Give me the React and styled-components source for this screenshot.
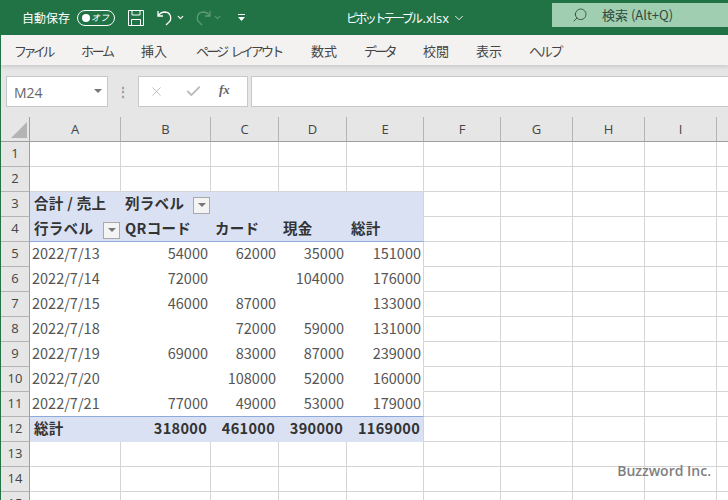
import React from "react";
import styled, { createGlobalStyle } from "styled-components";
import { Search, ChevronDown, X, Check } from "lucide-react";

const GlobalStyle = createGlobalStyle`
  html, body { margin: 0; padding: 0; background: #fff; }
  body { font-family: "Noto Sans CJK JP", "Liberation Sans", sans-serif; }
  #root { width: 728px; height: 500px; overflow: hidden; }
`;

const Page = styled.div`
  position: relative;
  width: 728px;
  height: 500px;
  overflow: hidden;
  border-left: 1px solid #217346;
  box-sizing: border-box;
`;

const TitleBar = styled.div`
  display: flex;
  align-items: center;
  height: 35px;
  margin-left: -1px;
  background: #217346;
  color: #fff;
`;
const AutoSave = styled.span`
  margin-left: 22px;
  font-size: 12px;
  width: 49px;
  white-space: nowrap;
`;
const Toggle = styled.div`
  display: flex;
  align-items: center;
  justify-content: space-between;
  box-sizing: border-box;
  width: 38px;
  height: 16px;
  margin-left: 6px;
  padding: 0 5px 0 4px;
  border: 1px solid #fff;
  border-radius: 8px;
  font-size: 9px;
  font-style: italic;
`;
const Knob = styled.i`
  width: 8px;
  height: 8px;
  border-radius: 50%;
  background: #fff;
`;
const QuickIcon = styled.svg`
  display: block;
  flex: none;
  margin-left: ${(p) => p.$gap}px;
`;
const SmallChevron = styled(ChevronDown)`
  flex: none;
  margin-left: ${(p) => p.$gap}px;
`;
const FileName = styled.div`
  display: flex;
  align-items: center;
  margin-left: 100px;
  width: 206px;
  font-size: 12px;
  white-space: nowrap;
`;
const FileKana = styled.span`
  letter-spacing: -2.6px;
  margin-right: 2px;
`;
const FileExt = styled.span`
  font-family: "Open Sans", sans-serif;
  font-size: 13px;
  margin-right: 3px;
`;
const SearchBox = styled.div`
  display: flex;
  align-items: center;
  width: 176px;
  height: 24px;
  margin-top: -6px;
  background: #9fcfb0;
  color: #33493b;
  font-size: 13px;
`;
const SearchIcon = styled(Search)`
  margin-left: 20px;
  transform: scaleX(-1);
`;
const SearchLabel = styled.span`
  margin-left: 14px;
  white-space: nowrap;
  font-family: "Noto Sans CJK JP", sans-serif;
`;

const MenuBar = styled.nav`
  display: flex;
  align-items: center;
  height: 30px;
  padding-left: 13px;
  background: #f3f2f1;
  box-shadow: 0 2px 4px rgba(0, 0, 0, 0.12);
  position: relative;
  color: #444;
  font-size: 13px;
`;
const MenuItem = styled.span`
  width: ${(p) => p.$w}px;
  flex: none;
  white-space: nowrap;
  letter-spacing: ${(p) => p.$squeeze || 0}px;
  word-spacing: 4px;
`;

const FormulaRow = styled.div`
  display: flex;
  align-items: flex-start;
  height: 52px;
  padding: 11px 0 0 5px;
  box-sizing: border-box;
  background: #e6e6e6;
`;
const NameBox = styled.div`
  display: flex;
  align-items: center;
  justify-content: space-between;
  box-sizing: border-box;
  width: 102px;
  height: 31px;
  padding: 2px 5px 0 7px;
  background: #fff;
  border: 1px solid #c8c8c8;
  color: #666;
  font-family: "Open Sans", sans-serif;
  font-size: 14px;
`;
const Caret = styled.i`
  width: 0;
  height: 0;
  border-left: 4px solid transparent;
  border-right: 4px solid transparent;
  border-top: 4px solid #777;
  margin-top: -3px;
`;
const Grip = styled.span`
  width: 30px;
  height: 31px;
  line-height: 29px;
  text-align: center;
  color: #999;
  font-size: 12px;
  font-weight: 700;
`;
const FormulaButtons = styled.div`
  display: flex;
  align-items: center;
  box-sizing: border-box;
  width: 110px;
  height: 31px;
  background: #fff;
  border: 1px solid #c8c8c8;
  padding-left: 10px;
`;
const CheckIcon = styled(Check)`
  margin-left: 21px;
`;
const Fx = styled.span`
  margin-left: 17px;
  margin-top: -3px;
  font-family: "Liberation Serif", serif;
  font-style: italic;
  font-weight: 700;
  font-size: 13px;
  color: #666;
`;
const FormulaInput = styled.div`
  flex: 1;
  height: 31px;
  margin-left: 3px;
  box-sizing: border-box;
  background: #fff;
  border: 1px solid #c8c8c8;
  border-right: none;
`;

const Sheet = styled.div`
  display: grid;
  grid-template-columns: 29px 91px 90px 68px 68px 77px 77px 72px 72px 72px 40px;
  grid-auto-rows: 25px;
  font-size: 14.5px;
  color: #444;
`;
const Corner = styled.div`
  background: #e6e6e6;
  border-right: 1px solid #9e9e9e;
  border-bottom: 1px solid #9e9e9e;
  box-sizing: border-box;
  position: relative;
  &::after {
    content: "";
    position: absolute;
    right: 2px;
    bottom: 3px;
    border-left: 16px solid transparent;
    border-bottom: 16px solid #b4b4b4;
  }
`;
const ColHead = styled.div`
  display: flex;
  align-items: center;
  justify-content: center;
  padding-bottom: 1px;
  box-sizing: border-box;
  background: #e6e6e6;
  border-right: 1px solid #b4b4b4;
  border-bottom: 1px solid #9e9e9e;
  font-family: "Open Sans", sans-serif;
  font-size: 13px;
  color: #444;
`;
const RowHead = styled.div`
  display: flex;
  align-items: center;
  justify-content: center;
  padding-bottom: 2px;
  box-sizing: border-box;
  background: #e6e6e6;
  border-right: 1px solid #9e9e9e;
  border-bottom: 1px solid #b4b4b4;
  font-family: "Open Sans", sans-serif;
  font-size: 13px;
  color: #444;
`;
// pivot cells drop the right gridline unless they close the table ($end)
const hasRightLine = (p) => p.$end || !(p.$fill || p.$plain);
const Cell = styled.div`
  display: flex;
  align-items: center;
  justify-content: ${(p) => (p.$right ? "flex-end" : "flex-start")};
  padding: 0 ${(p) => (p.$bold ? 3 : 2) + (hasRightLine(p) ? 0 : 1)}px 3px ${(p) => (p.$bold ? 4 : 2)}px;
  box-sizing: border-box;
  white-space: nowrap;
  background: ${(p) => (p.$fill ? "#d9e1f2" : "#fff")};
  font-weight: ${(p) => (p.$bold ? 700 : 400)};
  color: ${(p) => (p.$bold ? "#333" : "#555")};
  letter-spacing: ${(p) => (p.$bold ? "0.3px" : "0")};
  border-right: ${(p) => (hasRightLine(p) ? "1px solid #d4d4d4" : "none")};
  border-bottom: 1px solid ${(p) => (p.$line ? "#8ea9db" : p.$fill ? "#d9e1f2" : p.$plain ? "#fff" : "#d4d4d4")};
`;
const FilterButton = styled.span`
  display: flex;
  align-items: center;
  justify-content: center;
  flex: none;
  box-sizing: border-box;
  width: 17px;
  height: 17px;
  margin-left: ${(p) => p.$gap}px;
  margin-top: 5px;
  background: #f4f4f4;
  border: 1px solid #a9a9a9;
  &::after {
    content: "";
    border-left: 4px solid transparent;
    border-right: 4px solid transparent;
    border-top: 4px solid #777;
  }
`;
const Watermark = styled.div`
  position: absolute;
  right: 17px;
  top: 461px;
  font-family: "Open Sans", sans-serif;
  font-size: 14px;
  font-weight: 600;
  color: #7f7f7f;
`;

const columns = ["A", "B", "C", "D", "E", "F", "G", "H", "I", ""];
const menus = [
  ["ファイル", 67, -3.5], ["ホーム", 60, -2.3], ["挿入", 55], ["ページ レイアウト", 115, -2.8],
  ["数式", 53], ["データ", 59, -2.7], ["校閲", 53], ["表示", 53], ["ヘルプ", 60, -2.3],
];
const data = {
  5: ["2022/7/13", "54000", "62000", "35000", "151000"],
  6: ["2022/7/14", "72000", "", "104000", "176000"],
  7: ["2022/7/15", "46000", "87000", "", "133000"],
  8: ["2022/7/18", "", "72000", "59000", "131000"],
  9: ["2022/7/19", "69000", "83000", "87000", "239000"],
  10: ["2022/7/20", "", "108000", "52000", "160000"],
  11: ["2022/7/21", "77000", "49000", "53000", "179000"],
};
const totals = ["総計", "318000", "461000", "390000", "1169000"];
const headerRow = ["QRコード", "カード", "現金", "総計"];

function EmptyCells({ from = 0 }) {
  return columns.slice(from).map((c, i) => <Cell key={i} />);
}

function PivotRow({ row }) {
  if (row === 3) {
    return (
      <>
        <Cell $fill $bold>合計 / 売上</Cell>
        <Cell $fill $bold>
          <span>列ラベル</span>
          <FilterButton $gap={9} />
        </Cell>
        <Cell $fill /><Cell $fill /><Cell $fill $end />
      </>
    );
  }
  if (row === 4) {
    return (
      <>
        <Cell $fill $bold $line>
          <span>行ラベル</span>
          <FilterButton $gap={10} />
        </Cell>
        {headerRow.map((t, i) => (
          <Cell key={t} $fill $bold $line $end={i === 3}>{t}</Cell>
        ))}
      </>
    );
  }
  if (row === 12) {
    return totals.map((t, i) => (
      <Cell key={t} $fill $bold $right={i > 0} $end={i === 4}>{t}</Cell>
    ));
  }
  return data[row].map((t, i) => (
    <Cell key={i} $plain $line={row === 11} $right={i > 0} $end={i === 4}>{t}</Cell>
  ));
}

export default function App() {
  const rows = Array.from({ length: 15 }, (_, i) => i + 1);
  return (
    <Page>
      <GlobalStyle />
      <TitleBar>
        <AutoSave>自動保存</AutoSave>
        <Toggle><Knob />オフ</Toggle>
        <QuickIcon $gap={13} width="16" height="16" viewBox="0 0 16 16" fill="none" stroke="#fff" strokeWidth="1">
          <path d="M.5.5h15v15H.5z M4 .5v4.500h8V.5 M3.500 15.500V9.500h9v6" />
        </QuickIcon>
        <QuickIcon $gap={13} width="16" height="16" viewBox="0 0 16 16" fill="none" stroke="#fff" strokeWidth="1.300">
          <path d="M1 1v5h5 M1 6c2-3 4-4 7-4a6 6 0 0 1 3 11l-2 2" />
        </QuickIcon>
        <SmallChevron $gap={3} size={9} strokeWidth={3} />
        <QuickIcon $gap={10} width="16" height="16" viewBox="0 0 16 16" fill="none" stroke="#5c9a78" strokeWidth="1.300">
          <path d="M15 1v5h-5 M15 6c-2-3-4-4-7-4a6 6 0 0 0-3 11l2 2" />
        </QuickIcon>
        <SmallChevron $gap={2} size={9} strokeWidth={3} color="#5c9a78" />
        <QuickIcon $gap={15} width="9" height="9" viewBox="0 0 9 9" fill="#fff">
          <path d="M1 1h7v1H1z M1 4h7L4.500 8z" />
        </QuickIcon>
        <FileName>
          <FileKana>ピボットテーブル</FileKana>
          <FileExt>.xlsx</FileExt>
          <ChevronDown size={14} strokeWidth={1.500} />
        </FileName>
        <SearchBox>
          <SearchIcon size={16} strokeWidth={1.300} />
          <SearchLabel>検索 (Alt+Q)</SearchLabel>
        </SearchBox>
      </TitleBar>
      <MenuBar>
        {menus.map(([label, w, squeeze]) => (
          <MenuItem key={label} $w={w} $squeeze={squeeze}>{label}</MenuItem>
        ))}
      </MenuBar>
      <FormulaRow>
        <NameBox>M24<Caret /></NameBox>
        <Grip>⋮</Grip>
        <FormulaButtons>
          <X size={15} strokeWidth={1.500} color="#bbb" />
          <CheckIcon size={17} strokeWidth={2.500} color="#bbb" />
          <Fx>fx</Fx>
        </FormulaButtons>
        <FormulaInput />
      </FormulaRow>
      <Sheet>
        <Corner />
        {columns.map((c, i) => (
          <ColHead key={i}>{c}</ColHead>
        ))}
        {rows.map((row) => (
          <React.Fragment key={row}>
            <RowHead>{row}</RowHead>
            {row >= 3 && row <= 12 ? (
              <>
                <PivotRow row={row} />
                <EmptyCells from={5} />
              </>
            ) : (
              <EmptyCells />
            )}
          </React.Fragment>
        ))}
      </Sheet>
      <Watermark>Buzzword Inc.</Watermark>
    </Page>
  );
}
